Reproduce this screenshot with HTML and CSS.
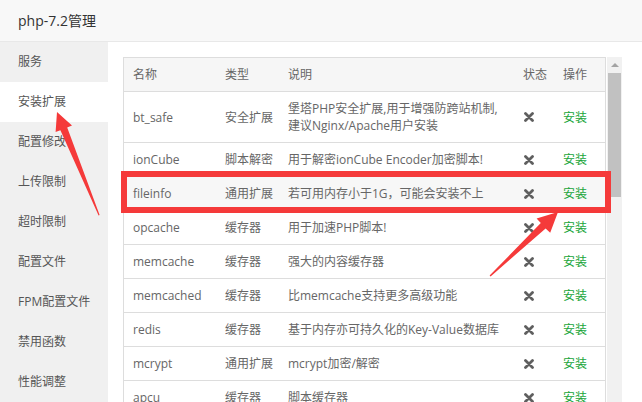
FILE: index.html
```html
<!DOCTYPE html>
<html lang="zh-CN">
<head>
<meta charset="utf-8">
<title>php-7.2管理</title>
<link rel="stylesheet" href="styles.css">
</head>
<body>
<div class="window">
  <div class="titlebar">php-7.2管理</div>
  <div class="main">
    <ul class="menu">
      <li>服务</li>
      <li class="active">安装扩展</li>
      <li>配置修改</li>
      <li>上传限制</li>
      <li>超时限制</li>
      <li>配置文件</li>
      <li>FPM配置文件</li>
      <li>禁用函数</li>
      <li>性能调整</li>
    </ul>
    <div class="content">
      <div class="scroller">
        <div class="table-wrap">
          <table class="ext">
            <colgroup>
              <col class="c-name"><col class="c-type"><col class="c-desc"><col class="c-state"><col class="c-op">
            </colgroup>
            <thead>
              <tr><th>名称</th><th>类型</th><th>说明</th><th>状态</th><th>操作</th></tr>
            </thead>
            <tbody>
              <tr><td>bt_safe</td><td>安全扩展</td><td>堡塔PHP安全扩展,用于增强防跨站机制,<br>建议Nginx/Apache用户安装</td><td><svg class="x" viewBox="0 0 10 10"><path d="M1.5 1.5 L8.5 8.5 M8.5 1.5 L1.5 8.5"/></svg></td><td><span class="install">安装</span></td></tr>
              <tr><td>ionCube</td><td>脚本解密</td><td>用于解密ionCube Encoder加密脚本!</td><td><svg class="x" viewBox="0 0 10 10"><path d="M1.5 1.5 L8.5 8.5 M8.5 1.5 L1.5 8.5"/></svg></td><td><span class="install">安装</span></td></tr>
              <tr class="hover"><td>fileinfo</td><td>通用扩展</td><td>若可用内存小于1G，可能会安装不上</td><td><svg class="x" viewBox="0 0 10 10"><path d="M1.5 1.5 L8.5 8.5 M8.5 1.5 L1.5 8.5"/></svg></td><td><span class="install">安装</span></td></tr>
              <tr><td>opcache</td><td>缓存器</td><td>用于加速PHP脚本!</td><td><svg class="x" viewBox="0 0 10 10"><path d="M1.5 1.5 L8.5 8.5 M8.5 1.5 L1.5 8.5"/></svg></td><td><span class="install">安装</span></td></tr>
              <tr><td>memcache</td><td>缓存器</td><td>强大的内容缓存器</td><td><svg class="x" viewBox="0 0 10 10"><path d="M1.5 1.5 L8.5 8.5 M8.5 1.5 L1.5 8.5"/></svg></td><td><span class="install">安装</span></td></tr>
              <tr><td>memcached</td><td>缓存器</td><td>比memcache支持更多高级功能</td><td><svg class="x" viewBox="0 0 10 10"><path d="M1.5 1.5 L8.5 8.5 M8.5 1.5 L1.5 8.5"/></svg></td><td><span class="install">安装</span></td></tr>
              <tr><td>redis</td><td>缓存器</td><td>基于内存亦可持久化的Key-Value数据库</td><td><svg class="x" viewBox="0 0 10 10"><path d="M1.5 1.5 L8.5 8.5 M8.5 1.5 L1.5 8.5"/></svg></td><td><span class="install">安装</span></td></tr>
              <tr><td>mcrypt</td><td>通用扩展</td><td>mcrypt加密/解密</td><td><svg class="x" viewBox="0 0 10 10"><path d="M1.5 1.5 L8.5 8.5 M8.5 1.5 L1.5 8.5"/></svg></td><td><span class="install">安装</span></td></tr>
              <tr><td>apcu</td><td>缓存器</td><td>脚本缓存器</td><td><svg class="x" viewBox="0 0 10 10"><path d="M1.5 1.5 L8.5 8.5 M8.5 1.5 L1.5 8.5"/></svg></td><td><span class="install">安装</span></td></tr>
            </tbody>
          </table>
        </div>
        <div class="scrollbar">
          <div class="sb-up"><span class="sb-tri"></span></div>
          <div class="sb-thumb"></div>
        </div>
      </div>
    </div>
  </div>
  <div class="mark-box"></div>
  <svg class="arrows" viewBox="0 0 642 402" width="642" height="402">
    <polygon points="57,112 72,125.5 67.2,127.6 99.6,215 98.6,215.4 60.4,130.2 55.6,132"/>
    <polygon points="558,212 550.2,232.8 545.6,228.4 490.6,276.4 489.6,275.6 540.8,223 536.6,218.6"/>
  </svg>
</div>
</body>
</html>
```
FILE: styles.css
```css
* { box-sizing: border-box; }
html, body { margin: 0; padding: 0; }
body {
  font-family: "Open Sans", "Noto Sans CJK SC", sans-serif;
  font-size: 12px;
  color: #666;
  background: #fff;
}
.window {
  position: relative;
  width: 642px;
  height: 402px;
  overflow: hidden;
  display: flex;
  flex-direction: column;
}
.titlebar {
  height: 42px;
  line-height: 41px;
  padding-left: 18px;
  font-size: 14px;
  color: #333;
  background: #f8f8f8;
  border-bottom: 1px solid #e8e8e8;
  flex: none;
}
.main {
  flex: 1;
  display: flex;
  min-height: 0;
}
.menu {
  list-style: none;
  margin: 0;
  padding: 0;
  width: 108px;
  flex: none;
  background: #f0f0f0;
}
.menu li {
  height: 40px;
  line-height: 40px;
  padding-left: 18px;
  color: #555;
  font-size: 12px;
  white-space: nowrap;
}
.menu li.active { background: #fff; }
.content {
  flex: 1;
  padding: 15px 0 0 15px;
  background: #fff;
  min-width: 0;
}
.scroller {
  display: flex;
  height: 100%;
}
.table-wrap {
  width: 484px;
  flex: none;
  overflow: hidden;
}
.ext {
  width: 483px;
  table-layout: fixed;
  border-collapse: separate;
  border-spacing: 0;
  border-top: 1px solid #ddd;
  border-left: 1px solid #ddd;
  border-right: 1px solid #ddd;
}
.c-name { width: 92px; }
.c-type { width: 63px; }
.c-desc { width: 235px; }
.c-state { width: 40px; }
.c-op { width: 51px; }
.ext th, .ext td {
  padding: 8px 0 8px 9px;
  line-height: 17px;
  text-align: left;
  font-weight: normal;
  border-bottom: 1px solid #ddd;
  white-space: nowrap;
  vertical-align: middle;
  color: #666;
}
.ext th { background: #f6f6f6; }
.ext tr.hover td { background: #f7f7f7; }
.x {
  display: block;
  width: 10px;
  height: 10px;
  margin-left: 1px;
  fill: none;
  stroke: #5f5f5f;
  stroke-width: 2.8;
  stroke-linecap: round;
}
.install { color: #20a53a; }
.scrollbar {
  width: 15px;
  flex: none;
  background: #f1f1f1;
  display: flex;
  flex-direction: column;
}
.sb-up {
  height: 16px;
  display: flex;
  align-items: center;
  justify-content: center;
}
.sb-tri {
  width: 0;
  height: 0;
  border-left: 4px solid transparent;
  border-right: 4px solid transparent;
  border-bottom: 4px solid #a3a3a3;
}
.sb-thumb {
  height: 124px;
  margin: 0 1px 0 1px;
  background: #c1c1c1;
}
.mark-box {
  position: absolute;
  left: 121px;
  top: 171px;
  width: 490px;
  height: 42px;
  border: 6px solid #f53a3a;
  pointer-events: none;
}
.arrows {
  position: absolute;
  left: 0;
  top: 0;
  pointer-events: none;
}
.arrows polygon { fill: #f53a3a; }
```
